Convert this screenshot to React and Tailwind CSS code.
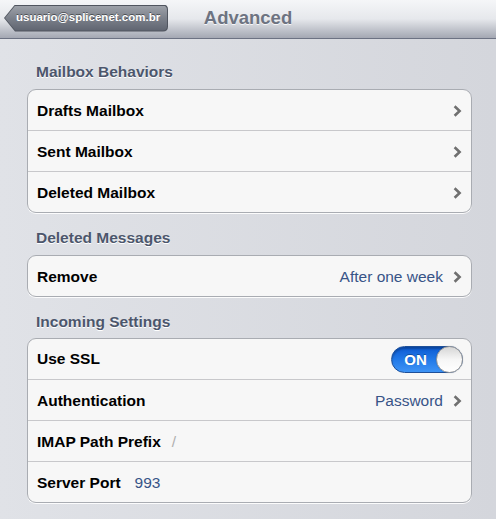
import React from "react";

const font = "font-['Liberation_Sans',Arial,sans-serif]";

function Chevron() {
  return (
    <svg width="9" height="12" viewBox="0 0 9 12" className="shrink-0">
      <path d="M1.6 1.2 L6.6 6 L1.6 10.8" fill="none" stroke="#707070" strokeWidth="2.6" strokeLinejoin="miter" />
    </svg>
  );
}

function Row({ label, value, chevron, last, children }) {
  return (
    <div className={`flex items-center pl-[9px] pr-[9px] pt-px ${last ? "h-[40px]" : "h-[41px] border-b border-[#c8c8cb]"}`}>
      <span className="text-[15.5px] font-bold text-black leading-none">{label}</span>
      {children}
      <div className="flex-1" />
      {value && <span className="text-[15.5px] text-[#385487] leading-none mr-[10px]">{value}</span>}
      {chevron && <Chevron />}
    </div>
  );
}

function Group({ children }) {
  return (
    <div className="mx-[27px] w-[445px] rounded-[9px] border border-[#a9acb2] bg-[#f7f7f7] shadow-[0_1px_0_rgba(255,255,255,0.9)] overflow-hidden">
      {children}
    </div>
  );
}

function Header({ children, mt }) {
  return (
    <div className={`pl-[36px] h-[18px] leading-[18px] text-[15.5px] font-bold text-[#4c566c] [text-shadow:0_1px_0_#fff] ${mt}`}>
      {children}
    </div>
  );
}

function Toggle() {
  return (
    <div className="w-[72px] h-[27px] rounded-full border border-[#1d4f99] bg-gradient-to-b from-[#0c5ad2] via-[#2179e8] to-[#3d93f5] flex items-center shadow-[inset_0_2px_2px_rgba(0,0,0,0.25)]">
      <span className="flex-1 text-center text-white font-bold text-[15px] leading-none pl-[3px] [text-shadow:0_-1px_0_rgba(0,0,0,0.3)]">ON</span>
      <div className="w-[27px] h-[27px] -mr-px rounded-full border border-[#9a9a9a] bg-gradient-to-b from-[#d6d6d6] via-[#f6f6f6] to-[#ffffff] shadow-[0_0_1px_rgba(0,0,0,0.3)]" />
    </div>
  );
}

export default function App() {
  return (
    <div className={`${font} w-[496px] h-[519px] overflow-hidden bg-gradient-to-r from-[#e0e2e7] to-[#d4d6dc]`}>
      {/* Nav bar */}
      <div className="relative h-[39px] border-b border-[#6c7283] bg-gradient-to-b from-[#f5f6f8] via-[#e6e8ec] to-[#a4a8b3] flex items-center">
        <div className="ml-[4px] mt-[-2px] w-[164px] h-[27px] bg-[#50555f] p-px [clip-path:path('M11,0L159,0Q164,0,164,5L164,22Q164,27,159,27L11,27L0,13.5Z')]">
          <div className="w-[162px] h-[25px] bg-gradient-to-b from-[#9da1a9] via-[#7b808a] to-[#5f6470] flex items-center pl-[11px] [clip-path:path('M10.3,0L157.5,0Q162,0,162,4.5L162,20.5Q162,25,157.5,25L10.3,25L0,12.5Z')]">
            <span className="text-white font-bold text-[11.5px] leading-none [text-shadow:0_-1px_0_rgba(0,0,0,0.45)]">usuario@splicenet.com.br</span>
          </div>
        </div>
        <div className="absolute left-0 right-0 top-0 h-[38px] flex items-center justify-center pointer-events-none">
          <span className="text-[18.5px] font-bold text-[#6d7381] leading-none mt-[-2px] [text-shadow:0_1px_0_rgba(255,255,255,0.8)]">Advanced</span>
        </div>
      </div>

      <Header mt="mt-[24px]">Mailbox Behaviors</Header>
      <div className="mt-[8px]">
        <Group>
          <Row label="Drafts Mailbox" chevron />
          <Row label="Sent Mailbox" chevron />
          <Row label="Deleted Mailbox" chevron last />
        </Group>
      </div>

      <Header mt="mt-[16px]">Deleted Messages</Header>
      <div className="mt-[8px]">
        <Group>
          <Row label="Remove" value="After one week" chevron last />
        </Group>
      </div>

      <Header mt="mt-[16px]">Incoming Settings</Header>
      <div className="mt-[7px]">
        <Group>
          <div className="flex items-center h-[41px] pl-[9px] pr-[8px] border-b border-[#c8c8cb]">
            <span className="text-[15.5px] font-bold text-black leading-none">Use SSL</span>
            <div className="flex-1" />
            <Toggle />
          </div>
          <Row label="Authentication" value="Password" chevron />
          <Row label="IMAP Path Prefix">
            <span className="ml-[11px] text-[15.5px] text-[#b0b0b0] leading-none">/</span>
          </Row>
          <Row label="Server Port" last>
            <span className="ml-[14px] text-[15.5px] text-[#385487] leading-none">993</span>
          </Row>
        </Group>
      </div>
    </div>
  );
}
